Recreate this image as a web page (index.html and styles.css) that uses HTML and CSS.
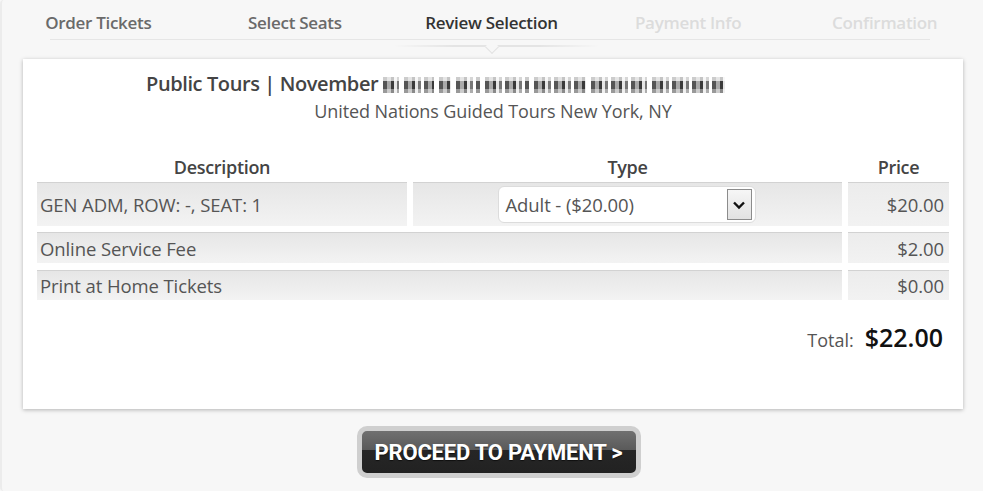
FILE: index.html
```html
<!DOCTYPE html>
<html lang="en">
<head>
<meta charset="utf-8">
<title>Review Selection</title>
<link rel="stylesheet" href="styles.css">
</head>
<body>
<div class="page">
  <nav class="steps">
    <div class="step done">Order Tickets</div>
    <div class="step done">Select Seats</div>
    <div class="step active">Review Selection</div>
    <div class="step todo">Payment Info</div>
    <div class="step todo">Confirmation</div>
  </nav>

  <section class="card">
    <h1 class="event-title">Public Tours | November <span class="redacted" aria-label="redacted"><span class="rw w1"></span><span class="rw w2"></span><span class="rw w3"></span><span class="rw w4"></span><span class="rw w5"></span><span class="rw w6"></span><span class="rw w7"></span><span class="rw w8"></span></span></h1>
    <p class="event-venue">United Nations Guided Tours New York, NY</p>

    <div class="order">
      <div class="head">Description</div>
      <div class="head">Type</div>
      <div class="head">Price</div>

      <div class="cell tall">GEN ADM, ROW: -, SEAT: 1</div>
      <div class="cell tall center">
        <div class="select">
          <span>Adult - ($20.00)</span>
          <span class="select-btn">
            <svg width="14" height="10" viewBox="0 0 14 10"><path d="M2 2.5 L7 7.5 L12 2.5" fill="none" stroke="#111" stroke-width="2.4"/></svg>
          </span>
        </div>
      </div>
      <div class="cell tall price">$20.00</div>

      <div class="cell wide">Online Service Fee</div>
      <div class="cell price">$2.00</div>

      <div class="cell wide r3">Print at Home Tickets</div>
      <div class="cell price r3">$0.00</div>
    </div>

    <div class="total">
      <span class="total-label">Total:</span>
      <span class="total-value">$22.00</span>
    </div>
  </section>

  <div class="actions">
    <button class="proceed" type="button">PROCEED TO PAYMENT &gt;</button>
  </div>
</div>
</body>
</html>
```

FILE: styles.css
```css
* { box-sizing: border-box; }

html, body {
  margin: 0;
  padding: 0;
  background: #f7f7f7;
}

body {
  font-family: "Open Sans", "Noto Sans", sans-serif;
  color: #555;
}

.page {
  width: 983px;
  height: 491px;
  border-left: 2px solid #ececec;
  border-radius: 4px 0 0 4px;
}

/* Step navigation */
.steps {
  display: grid;
  grid-template-columns: repeat(5, 1fr);
  height: 40px;
  margin-left: -2px;
  padding-top: 11px;
  position: relative;
}

.steps::after {
  content: "";
  position: absolute;
  left: 50px;
  right: 53px;
  bottom: 0;
  height: 1px;
  background: #e6e6e6;
}

.step {
  text-align: center;
  font-size: 17px;
  font-weight: 600;
  line-height: 24px;
  letter-spacing: -0.3px;
  position: relative;
}

.step.done { color: #6a6a6a; }
.step.active { color: #333; }
.step.todo { color: #dcdcdc; }

.step.active::before {
  content: "";
  position: absolute;
  left: 0;
  right: -10px;
  bottom: -7px;
  height: 2px;
  background: linear-gradient(90deg, rgba(0,0,0,0), rgba(0,0,0,0.08) 30%, rgba(0,0,0,0.08) 70%, rgba(0,0,0,0));
}

.step.active::after {
  content: "";
  position: absolute;
  left: 50%;
  bottom: -12px;
  width: 9px;
  height: 9px;
  margin-left: -4px;
  background: #f7f7f7;
  border-right: 1px solid #e2e2e2;
  border-bottom: 1px solid #e2e2e2;
  transform: rotate(45deg);
}

/* Card */
.card {
  margin: 19px 0 0 21px;
  width: 940px;
  height: 350px;
  background: #fff;
  box-shadow: 0 1px 4px rgba(0,0,0,0.28);
  padding: 12px 14px 0 14px;
}

.event-title {
  margin: 0 0 0 109px;
  font-size: 20px;
  font-weight: 600;
  color: #444;
  line-height: 26px;
  letter-spacing: -0.4px;
}

.redacted {
  display: inline-flex;
  gap: 5px;
  width: 346px;
  height: 16px;
  vertical-align: -2px;
  filter: blur(0.3px);
}

.rw {
  height: 16px;
  background:
    linear-gradient(180deg, rgba(255,255,255,0.7) 0 4px, rgba(255,255,255,0) 4px 12px, rgba(255,255,255,0.4) 12px),
    repeating-linear-gradient(90deg, #555 0 4px, #aaa 4px 8px, #3a3a3a 8px 11px, #e6e6e6 11px 14px, #777 14px 17px, #fff 17px 20px);
}
.w1 { width: 16px; }
.w2 { width: 30px; }
.w3 { width: 12px; }
.w4 { width: 24px; }
.w5 { width: 44px; }
.w6 { width: 52px; }
.w7 { width: 56px; }
.w8 { width: 73px; }

.event-venue {
  margin: 1px 0 0 0;
  text-align: center;
  font-size: 18px;
  line-height: 26px;
  color: #555;
  letter-spacing: -0.1px;
}

/* Order table */
.order {
  display: grid;
  grid-template-columns: 370px 429px 101px;
  column-gap: 6px;
  row-gap: 6px;
  margin-top: 31px;
}

.head {
  text-align: center;
  font-size: 18px;
  font-weight: 600;
  color: #444;
  line-height: 24px;
  margin-bottom: -3px;
  letter-spacing: -0.3px;
}

.cell {
  display: flex;
  align-items: center;
  height: 31px;
  padding: 0 3px;
  font-size: 18.5px;
  color: #555;
  letter-spacing: -0.1px;
  border-top: 1px solid #d2d2d2;
  background: linear-gradient(#e6e6e6, #f3f3f3);
}

.cell.tall { height: 44px; }
.cell.wide { grid-column: 1 / 3; }
.cell.r3 { margin-top: 1px; height: 30px; }
.cell.center { justify-content: center; padding-left: 0; padding-right: 0; }
.cell.price {
  justify-content: flex-end;
  padding-right: 5px;
  background: linear-gradient(#ececec, #f2f2f2);
}

.select {
  width: 258px;
  height: 37px;
  margin-left: -2px;
  display: flex;
  align-items: center;
  justify-content: space-between;
  padding: 0 3px 0 7px;
  background: #fff;
  border: 1px solid #dcdcdc;
  border-radius: 6px;
  font-size: 18.5px;
  color: #555;
}

.select-btn {
  width: 25px;
  height: 31px;
  display: flex;
  align-items: center;
  justify-content: center;
  border: 1px solid #8c8c8c;
  background: linear-gradient(#f6f6f6, #e2e2e2);
}

/* Total */
.total {
  display: flex;
  justify-content: flex-end;
  align-items: baseline;
  gap: 11px;
  margin-top: 20px;
  padding-right: 6px;
}

.total-label {
  font-size: 18px;
  font-weight: 400;
  color: #555;
}

.total-value {
  font-size: 25px;
  font-weight: 600;
  color: #111;
}

/* Button */
.actions {
  display: flex;
  justify-content: center;
  margin-top: 17px;
  padding-left: 12px;
}

.proceed {
  width: 284px;
  height: 52px;
  border: 5px solid #cfcfcf;
  border-radius: 10px;
  background: linear-gradient(#707070 0%, #5a5a5a 45%, #262626 46%, #222 100%);
  color: #fff;
  font-family: "Roboto", "Open Sans", sans-serif;
  font-weight: 700;
  font-size: 22px;
  letter-spacing: -0.2px;
  text-shadow: 0 1px 1px rgba(0,0,0,0.6);
  padding: 0;
  cursor: pointer;
}
```
